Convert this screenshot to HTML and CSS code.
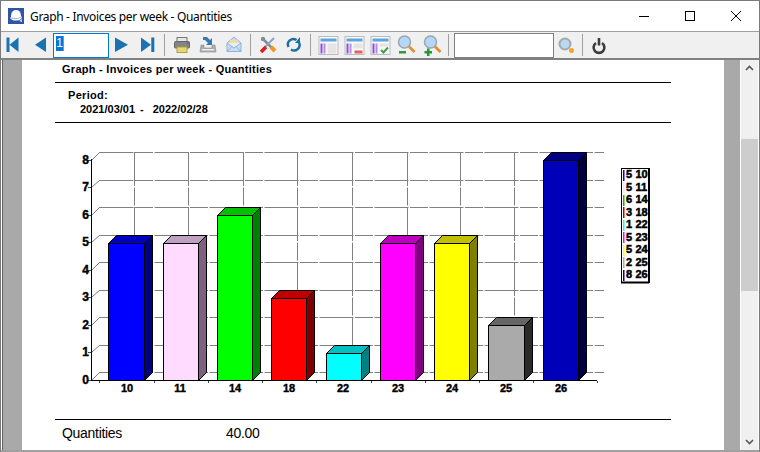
FILE: index.html
```html
<!DOCTYPE html>
<html lang="en">
<head>
<meta charset="utf-8">
<title>Graph - Invoices per week - Quantities</title>
<link rel="stylesheet" href="styles.css">
</head>
<body>
<div class="window">
  <header class="titlebar">
    <svg class="app-icon" width="16" height="16" viewBox="0 0 16 16"><rect width="16" height="16" fill="#2f55a4"/><path d="M3 9C3 4 5 2 8 2s5 2 5 6c1 1 1 2 0 3-3 2-8 2-10 0-1-1-1-1 0-2z" fill="#fff"/><path d="M3 10c3 1 7 1 10-1" stroke="#9fb2d6" fill="none"/><path d="M11 13l3-2v3z" fill="#cdd7ea"/></svg>
    <span class="title">Graph - Invoices per week - Quantities</span>
    <div class="controls">
      <svg class="ctl" width="46" height="30" viewBox="0 0 46 30"><path d="M18 15.500h10" stroke="#000"/></svg>
      <svg class="ctl" width="46" height="30" viewBox="0 0 46 30"><rect x="18.500" y="10.500" width="9" height="9" fill="none" stroke="#000"/></svg>
      <svg class="ctl" width="46" height="30" viewBox="0 0 46 30"><path d="M18 10l10 10M28 10L18 20" stroke="#000" fill="none"/></svg>
    </div>
  </header>
  <nav class="toolbar">
    <span class="btn"><svg width="26" height="26" viewBox="0 0 26 26"><path d="M6.500 5.500h3V20h-3zM18.500 5.500V20l-9-7.250z" fill="#1a72b0"/></svg></span>
    <span class="btn"><svg width="26" height="26" viewBox="0 0 26 26"><path d="M19 5.500V20L8 12.750z" fill="#1a72b0"/></svg></span>
    <span class="page-box"><span class="sel">1</span><span class="caret"></span></span>
    <span class="btn"><svg width="26" height="26" viewBox="0 0 26 26"><path d="M6 5.500V20l13-7.250z" fill="#1a72b0"/></svg></span>
    <span class="btn"><svg width="26" height="26" viewBox="0 0 26 26"><path d="M6 5.500V20l10-7.250zM16.300 5.500h3V20h-3z" fill="#1a72b0"/></svg></span>
    <span class="sep"></span>
    <span class="btn"><svg width="26" height="26" viewBox="0 0 26 26"><rect x="8" y="5.500" width="10" height="5" fill="#e8e8e0" stroke="#777"/><rect x="5.500" y="9.500" width="15" height="6.500" rx="1" fill="#7f858a" stroke="#666"/><rect x="8" y="15" width="10" height="5.500" fill="#e6d870" stroke="#b0a040"/><rect x="18" y="10.500" width="1.500" height="1.500" fill="#d03030"/></svg></span>
    <span class="btn"><svg width="26" height="26" viewBox="0 0 26 26"><path d="M6 13h3v3h8v-3h3l1 7H5z" fill="#a9adb2" stroke="#8a8e92" stroke-width=".6"/><rect x="7" y="17" width="12" height="1.500" fill="#eee"/><path d="M8 5l4 0 3 3 2-2v7h-6l2-2-3-3H8z" fill="#3a79ad"/></svg></span>
    <span class="btn"><svg width="26" height="26" viewBox="0 0 26 26"><path d="M6 11l7-6 7 6v8.500H6z" fill="#c8ddf2" stroke="#8fb3d4"/><rect x="9" y="8" width="8" height="5" fill="#f4dca0"/><path d="M6 11l7 5 7-5" fill="#e4effa" stroke="#8fb3d4"/><path d="M6 19.500l5-5M20 19.500l-5-5" stroke="#8fb3d4" fill="none"/></svg></span>
    <span class="sep"></span>
    <span class="btn"><svg width="26" height="26" viewBox="0 0 26 26"><path d="M8 7l10 10" stroke="#7d8ea0" stroke-width="2.500"/><path d="M19 6L8 17" stroke="#8fa2b6" stroke-width="2"/><path d="M6 20l5-5" stroke="#d81f1f" stroke-width="3.500"/><path d="M16 15l4 4" stroke="#ef9a1e" stroke-width="4"/><circle cx="8" cy="7" r="2.200" fill="#7d8ea0"/></svg></span>
    <span class="btn"><svg width="26" height="26" viewBox="0 0 26 26"><path d="M7.500 15a5.500 5.500 0 0 1 8-7" fill="none" stroke="#1a6fa8" stroke-width="2.500"/><path d="M18 10.500a5.500 5.500 0 0 1-8 7" fill="none" stroke="#1a6fa8" stroke-width="2.500"/><path d="M19 5v6h-5z" fill="#1a6fa8"/></svg></span>
    <span class="sep"></span>
    <span class="btn"><svg width="26" height="26" viewBox="0 0 26 26"><rect x="4" y="4.500" width="19" height="18" fill="#f8f8f8" stroke="#bbb"/><rect x="5.500" y="6.500" width="16" height="3" fill="#5da5dc"/><path d="M5.500 11.500h2v10h-2z" fill="#8c4fd0"/><path d="M8.500 11.500h2v10h-2z" fill="#b58ae8"/><path d="M12.500 11.500h9v10h-9z" fill="#e4e4e4"/></svg></span>
    <span class="btn"><svg width="26" height="26" viewBox="0 0 26 26"><rect x="4" y="4.500" width="19" height="18" fill="#f8f8f8" stroke="#bbb"/><rect x="5.500" y="6.500" width="16" height="3" fill="#5da5dc"/><path d="M5.500 11.500h2v10h-2z" fill="#8c4fd0"/><path d="M8.500 11.500h2v10h-2z" fill="#b58ae8"/><path d="M12.500 11.500h9v5h-9z" fill="#e4e4e4"/><rect x="13.500" y="18.500" width="8" height="3" fill="#e06060"/></svg></span>
    <span class="btn"><svg width="26" height="26" viewBox="0 0 26 26"><rect x="4" y="4.500" width="19" height="18" fill="#f8f8f8" stroke="#bbb"/><rect x="5.500" y="6.500" width="16" height="3" fill="#5da5dc"/><path d="M5.500 11.500h2v10h-2z" fill="#8c4fd0"/><path d="M8.500 11.500h2v10h-2z" fill="#b58ae8"/><path d="M12.500 11.500h9v3h-9z" fill="#e4e4e4"/><path d="M14 18l2.500 2.500L21 15.500" fill="none" stroke="#3ea04a" stroke-width="2"/></svg></span>
    <span class="btn"><svg width="26" height="26" viewBox="0 0 26 26"><circle cx="11.500" cy="10" r="6" fill="#b6d8f6" stroke="#9aa6b2" stroke-width="1.500"/><path d="M16 14.500l5.500 5.500" stroke="#ea8a22" stroke-width="2.500"/><rect x="6" y="19" width="7" height="2.500" fill="#2e9a3c"/></svg></span>
    <span class="btn"><svg width="26" height="26" viewBox="0 0 26 26"><circle cx="11.500" cy="10" r="6" fill="#b6d8f6" stroke="#9aa6b2" stroke-width="1.500"/><path d="M16 14.500l5.500 5.500" stroke="#ea8a22" stroke-width="2.500"/><path d="M8 16.500h2.500V19H13v2.500h-2.500V24H8v-2.500H5.500V19H8z" fill="#1f9a2e"/></svg></span>
    <span class="sep"></span>
    <span class="search-box"></span>
    <span class="btn btn-glass"><svg width="24" height="26" viewBox="0 0 24 26"><circle cx="11" cy="12" r="5.500" fill="#b9d9f2" stroke="#a5a8ac" stroke-width="2"/><circle cx="17.500" cy="18.500" r="2.500" fill="#f5a623"/></svg></span>
    <span class="sep sep-last"></span>
    <span class="btn"><svg width="26" height="26" viewBox="0 0 26 26"><path d="M10 11a5.400 5.400 0 1 0 6 0" fill="none" stroke="#3c3c3c" stroke-width="2.600"/><rect x="11.700" y="6" width="2.600" height="7.500" fill="#3c3c3c"/></svg></span>
  </nav>
  <div class="workspace">
    <div class="gutter"></div>
    <main class="page">
      <h1 class="report-title">Graph - Invoices per week - Quantities</h1>
      <section class="period">
        <div class="period-label">Period:</div>
        <div class="period-dates"><span>2021/03/01</span><span>-</span><span>2022/02/28</span></div>
      </section>
      <svg class="chart" width="616" height="296" viewBox="55 123 616 296">
        <g class="grid">
          <path d="M99.500 152.500H604M99.500 180.500H604M99.500 207.500H604M99.500 235.500H604M99.500 262.500H604M99.500 290.500H604M99.500 317.500H604M99.500 345.500H604M99.500 372.500H604"/>
          <path d="M134.500 152V372M188.500 152V372M243.500 152V372M297.500 152V372M352.500 152V372M407.500 152V372M460.500 152V372M514.500 152V372"/>
        </g>
        <path class="diag" d="M92 160l8-8M92 187l8-7M92 215l8-8M92 242l8-7M92 270l8-8M92 297l8-7M92 325l8-8M92 352l8-7M92 380l8-8"/>
        <g class="axis">
          <path d="M91.500 159V381M91 380.500H597"/>
          <path class="ticks" d="M88 160.500h3M88 187.500h3M88 215.500h3M88 242.500h3M88 270.500h3M88 297.500h3M88 325.500h3M88 352.500h3M88 380.500h3M99.500 381v2M154.500 381v2M208.500 381v2M262.500 381v2M316.500 381v2M371.500 381v2M425.500 381v2M479.500 381v2M533.500 381v2M597.500 381v2"/>
        </g>
        <g class="bars">
          <path fill="#000080" d="M144.500 380.500v-137l8-8v137z"/><path fill="#0000c0" d="M108.500 243.500l8-8h36l-8 8z"/><rect fill="#0000ff" x="108.500" y="243.500" width="36" height="137"/>
          <path fill="#806080" d="M198.500 380.500v-137l8-8v137z"/><path fill="#c0a0c0" d="M163.500 243.500l8-8h35l-8 8z"/><rect fill="#ffdcff" x="163.500" y="243.500" width="35" height="137"/>
          <path fill="#008000" d="M252.500 380.500v-165l8-8v165z"/><path fill="#00c000" d="M217.500 215.500l8-8h35l-8 8z"/><rect fill="#00ff00" x="217.500" y="215.500" width="35" height="165"/>
          <path fill="#800000" d="M306.500 380.500v-82l8-8v82z"/><path fill="#c00000" d="M271.500 298.500l8-8h35l-8 8z"/><rect fill="#ff0000" x="271.500" y="298.500" width="35" height="82"/>
          <path fill="#008080" d="M361.500 380.500v-27l8-8v27z"/><path fill="#00c0c0" d="M326.500 353.500l8-8h35l-8 8z"/><rect fill="#00ffff" x="326.500" y="353.500" width="35" height="27"/>
          <path fill="#800080" d="M415.500 380.500v-137l8-8v137z"/><path fill="#c000c0" d="M380.500 243.500l8-8h35l-8 8z"/><rect fill="#ff00ff" x="380.500" y="243.500" width="35" height="137"/>
          <path fill="#808000" d="M469.500 380.500v-137l8-8v137z"/><path fill="#c0c000" d="M434.500 243.500l8-8h35l-8 8z"/><rect fill="#ffff00" x="434.500" y="243.500" width="35" height="137"/>
          <path fill="#2a2a2a" d="M524.500 380.500v-55l8-8v55z"/><path fill="#666666" d="M488.500 325.500l8-8h36l-8 8z"/><rect fill="#aaaaaa" x="488.500" y="325.500" width="36" height="55"/>
          <path fill="#000040" d="M578.500 380.500v-220l8-8v220z"/><path fill="#000080" d="M543.500 160.500l8-8h35l-8 8z"/><rect fill="#0000b8" x="543.500" y="160.500" width="35" height="220"/>
        </g>
        <g class="ylabels">
          <text x="89" y="164">8</text><text x="89" y="191">7</text><text x="89" y="219">6</text><text x="89" y="246">5</text><text x="89" y="274">4</text><text x="89" y="301">3</text><text x="89" y="329">2</text><text x="89" y="356">1</text><text x="89" y="384">0</text>
        </g>
        <g class="xlabels">
          <text x="127" y="392">10</text><text x="180" y="392">11</text><text x="235" y="392">14</text><text x="289" y="392">18</text><text x="343" y="392">22</text><text x="398" y="392">23</text><text x="452" y="392">24</text><text x="506" y="392">25</text><text x="561" y="392">26</text>
        </g>
        <g class="legend">
          <rect class="legend-box" x="621.500" y="168.500" width="27" height="114"/>
          <path class="legend-edge" d="M649 168V283M621 282.500H649"/>
          <rect fill="#0000ff" x="623" y="170" width="1.500" height="11"/><rect fill="#ffdcff" x="623" y="182" width="1.500" height="11"/><rect fill="#00c000" x="623" y="195" width="1.500" height="11"/><rect fill="#c00000" x="623" y="207" width="1.500" height="11"/><rect fill="#00ffff" x="623" y="220" width="1.500" height="11"/><rect fill="#ff00ff" x="623" y="232" width="1.500" height="11"/><rect fill="#ffff00" x="623" y="245" width="1.500" height="11"/><rect fill="#aaaaaa" x="623" y="257" width="1.500" height="11"/><rect fill="#0000b8" x="623" y="270" width="1.500" height="11"/>
          <text x="626" y="178">5</text><text x="635.500" y="178">10</text>
          <text x="626" y="191">5</text><text x="635.500" y="191">11</text>
          <text x="626" y="203">6</text><text x="635.500" y="203">14</text>
          <text x="626" y="216">3</text><text x="635.500" y="216">18</text>
          <text x="626" y="228">1</text><text x="635.500" y="228">22</text>
          <text x="626" y="241">5</text><text x="635.500" y="241">23</text>
          <text x="626" y="253">5</text><text x="635.500" y="253">24</text>
          <text x="626" y="266">2</text><text x="635.500" y="266">25</text>
          <text x="626" y="278">8</text><text x="635.500" y="278">26</text>
        </g>
      </svg>
      <footer class="totals"><span class="totals-label">Quantities</span><span>40.00</span></footer>
    </main>
    <div class="gutter gutter-right"></div>
    <div class="scrollbar">
      <svg width="17" height="17" viewBox="0 0 17 17"><path d="M5 10l3.500-3.500L12 10" fill="none" stroke="#555" stroke-width="1.600"/></svg>
      <div class="track"><div class="thumb"></div></div>
      <svg width="17" height="17" viewBox="0 0 17 17"><path d="M5 7l3.500 3.500L12 7" fill="none" stroke="#555" stroke-width="1.600"/></svg>
    </div>
  </div>
</div>
</body>
</html>
```
FILE: styles.css
```css
* { box-sizing: border-box; }
html, body { margin: 0; padding: 0; width: 760px; height: 452px; overflow: hidden; background: #fff; }
.window {
  width: 760px; height: 452px;
  border: 1px solid #7a7a7a;
  border-bottom-color: #a0a0a0;
  display: flex; flex-direction: column;
  background: #f0f0f0;
  font-family: "Liberation Sans", Arial, sans-serif;
}
.titlebar {
  height: 31px; flex: none; display: flex; align-items: center;
  background: #fff; border-bottom: 1px solid #a0a0a0;
  padding-left: 7px;
}
.app-icon { flex: none; }
.title { margin-left: 6px; font: 12px "Noto Sans", "Open Sans", sans-serif; letter-spacing: -.33px; color: #000; }
.controls { margin-left: auto; display: flex; padding-bottom: 1px; }
.ctl { display: block; }
.toolbar {
  height: 28px; flex: none; display: flex; align-items: center;
  background: #f0f0f0; border-bottom: 2px solid #808080;
}
.btn { width: 26px; height: 26px; flex: none; display: block; }
.btn svg { display: block; }
.btn:first-child svg { margin-left: -1px; }
.btn-glass { width: 24px; }
.sep { width: 1px; height: 22px; flex: none; background: #a0a0a0; margin: 0 4px 0 3px; }
.sep-last { margin: 0 3px 0 4px; }
.page-box {
  width: 56px; height: 25px; flex: none; background: #fff;
  border: 1px solid #0078d7; padding: 2px 0 0 2px;
  display: flex; align-items: flex-start;
  font: 12px "Liberation Sans", sans-serif;
}
.sel { background: #0078d7; color: #fff; height: 15px; line-height: 15px; width: 7px; display: block; text-align: center; }
.caret { width: 1px; height: 15px; background: #e87a1a; }
.search-box { width: 100px; height: 25px; flex: none; background: #fff; border: 1px solid #808080; margin-left: 1px; }
.workspace { flex: 1; display: flex; min-height: 0; padding-left: 1px; border-bottom: 1px solid #a0a0a0; background: #fff; }
.gutter { width: 20px; flex: none; background: #a9a9a9; border-left: 1px solid #646464; }
.gutter-right { width: 16px; border-left: 0; }
.page { width: 702px; flex: none; background: #fff; padding: 0 53px 0 33px; display: flex; flex-direction: column; color: #000; }
.report-title {
  margin: 0; height: 23px; padding: 3px 0 0 7px; flex: none;
  font-size: 11px; line-height: 13px; font-weight: bold;
  letter-spacing: .27px; border-bottom: 1px solid #000;
}
.period { height: 40px; flex: none; border-bottom: 1px solid #000; padding: 6px 0 0 13px; font-size: 11px; line-height: 13px; font-weight: bold; }
.period-label { letter-spacing: .3px; }
.period-dates { padding-left: 12px; display: flex; margin-top: 1px; }
.period-dates span:nth-child(2) { margin: 0 9px 0 5px; }
.chart { display: block; flex: none; }
.grid path { stroke: #808080; fill: none; stroke-dasharray: 34 1.500 18 1.500; }
.diag { stroke: #808080; fill: none; }
.axis path { stroke: #000; fill: none; }
.axis .ticks { stroke: #444; }
.bars path, .bars rect { stroke: #000; }
.ylabels text { font: bold 12px "Liberation Sans", sans-serif; text-anchor: end; stroke: #000; stroke-width: .4px; }
.xlabels text { font: bold 11px "Liberation Sans", sans-serif; text-anchor: middle; stroke: #000; stroke-width: .4px; }
.legend text { font: bold 11px "Liberation Sans", sans-serif; stroke: #000; stroke-width: .5px; }
.legend-box { fill: #fff; stroke: #000; }
.legend-edge { stroke: #000; fill: none; stroke-width: 2px; }
.totals { border-top: 1px solid #000; flex: none; height: 29px; display: flex; padding: 5px 0 0 7px; font-size: 14px; line-height: 16px; letter-spacing: -.3px; }
.totals-label { width: 164px; }
.scrollbar { width: 17px; margin-left: 1px; flex: none; background: #f0f0f0; display: flex; flex-direction: column; }
.scrollbar svg { display: block; flex: none; }
.track { flex: 1; padding-top: 62px; }
.thumb { height: 152px; background: #cdcdcd; }
```
